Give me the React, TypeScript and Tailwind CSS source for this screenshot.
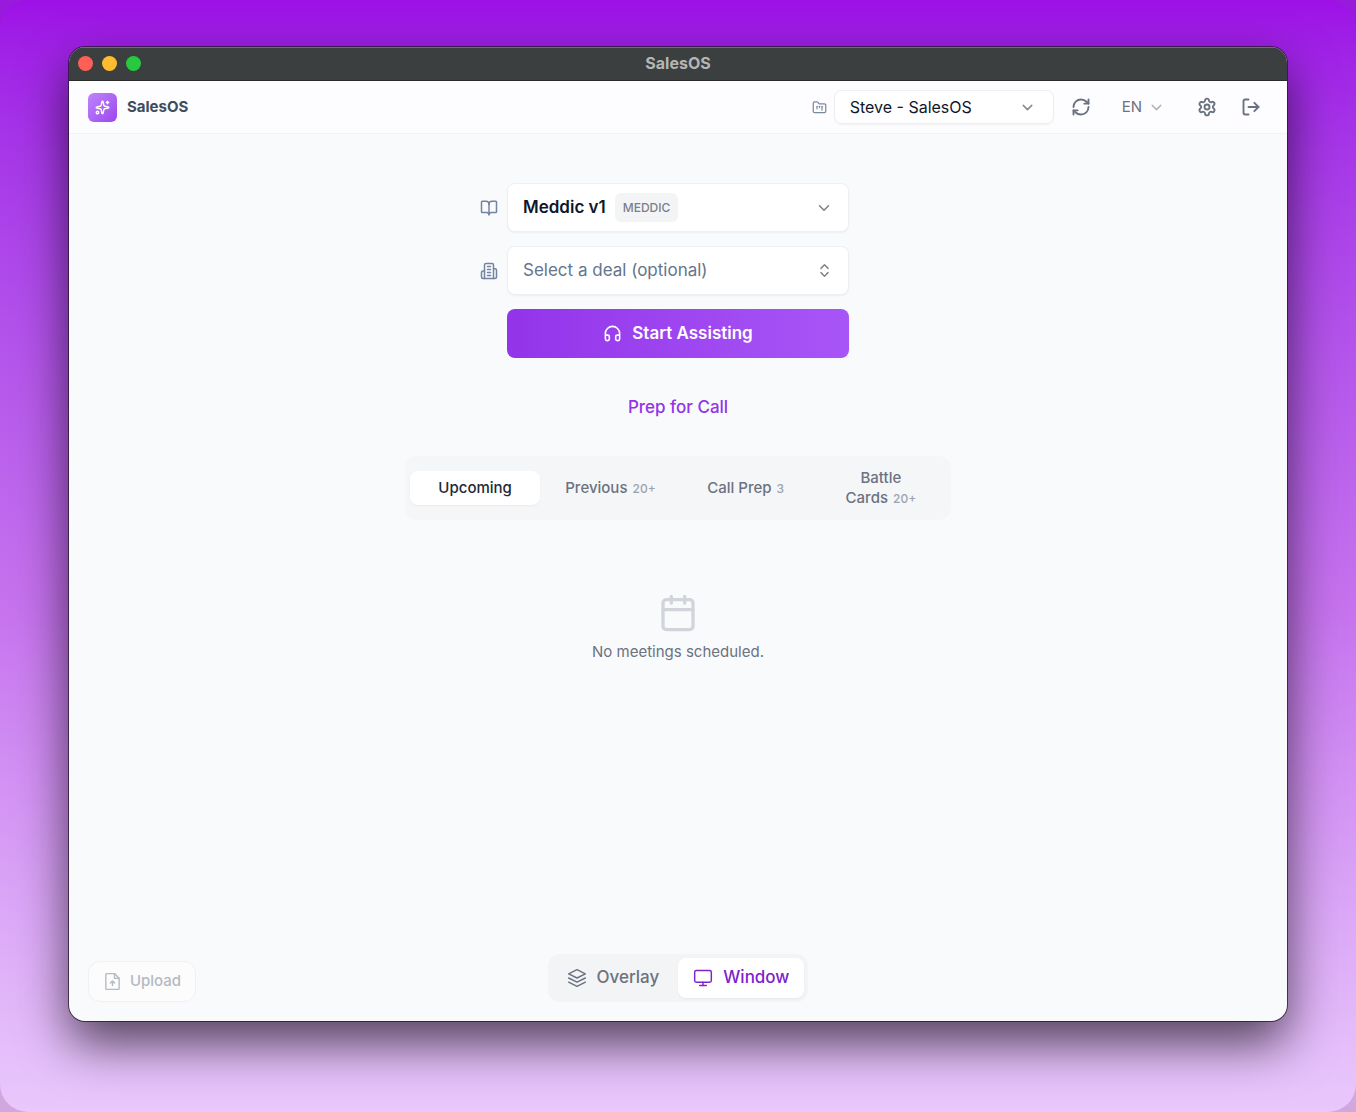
import {
  BookOpen,
  Calendar,
  ChevronDown,
  ChevronsUpDown,
  FolderKanban,
  Headphones,
  LogOut,
  Monitor,
  RefreshCw,
  Settings,
  Sparkles,
} from "lucide-react";
import { useState } from "react";

function BuildingIcon({ className }: { className?: string }) {
  return (
    <svg className={className} viewBox="0 0 24 24" fill="none" stroke="currentColor" strokeWidth="2" strokeLinecap="round" strokeLinejoin="round" aria-hidden="true">
      <path d="M6 22V4a2 2 0 0 1 2-2h8a2 2 0 0 1 2 2v18Z" />
      <path d="M6 12H4a2 2 0 0 0-2 2v6a2 2 0 0 0 2 2h2" />
      <path d="M18 9h2a2 2 0 0 1 2 2v9a2 2 0 0 1-2 2h-2" />
      <path d="M10 6h4M10 10h4M10 14h4M10 18h4" />
    </svg>
  );
}

function FileUpIcon({ className }: { className?: string }) {
  return (
    <svg className={className} viewBox="0 0 24 24" fill="none" stroke="currentColor" strokeWidth="1.75" strokeLinecap="round" strokeLinejoin="round" aria-hidden="true">
      <path d="M14.5 2H4.6a1 1 0 0 0-1 1v18a1 1 0 0 0 1 1h14.8a1 1 0 0 0 1-1V8Z" />
      <path d="M14.5 2v6h6" />
      <path d="M12 17v-5M9.3 14l2.7-2.7 2.7 2.7" />
    </svg>
  );
}

function LayersIcon({ className }: { className?: string }) {
  return (
    <svg className={className} viewBox="0 0 24 24" fill="none" stroke="currentColor" strokeWidth="1.75" strokeLinecap="round" strokeLinejoin="round" aria-hidden="true">
      <path d="M12 2 2 7l10 5 10-5Z" />
      <path d="m2 12 10 5 10-5" />
      <path d="m2 17 10 5 10-5" />
    </svg>
  );
}

function WindowIcon({ className }: { className?: string }) {
  return <Monitor className={className} strokeWidth={1.75} />;
}

const tabs = [
  { label: "Upcoming", count: "" },
  { label: "Previous", count: "20+" },
  { label: "Call Prep", count: "3" },
  { label: "Battle Cards", count: "20+" },
];

const modes = [
  { name: "Overlay", Icon: LayersIcon },
  { name: "Window", Icon: WindowIcon },
];

export default function App() {
  const [tab, setTab] = useState("Upcoming");
  const [mode, setMode] = useState("Window");

  return (
    <div className="bg-linear-to-b from-[#981adb] from-50% to-[#d0a8de] to-50% font-['Inter',sans-serif]">
      <div className="flex min-h-screen flex-col rounded-[28px] bg-linear-to-b from-[#9d10e6] via-[#c673ee] via-55% to-[#e9c8fc] px-[69px] pt-[47px] pb-[91px]">
        <div className="flex grow flex-col overflow-hidden rounded-2xl bg-[#f9fafc] shadow-[0_0_0_1px_rgba(40,20,50,0.75),0_22px_50px_rgba(0,0,0,0.65)]">
          <div className="grid h-[34px] grid-cols-[1fr_auto_1fr] items-center border-t border-b border-t-[#6c6e6f] border-b-[#292b2b] bg-[#3b3f3f] px-[9px] pb-[2px]">
            <div className="flex gap-[9px]">
              <button aria-label="Close" className="size-[15px] rounded-full bg-[#ff5f57]" />
              <button aria-label="Minimize" className="size-[15px] rounded-full bg-[#febc2e]" />
              <button aria-label="Zoom" className="size-[15px] rounded-full bg-[#28c840]" />
            </div>
            <h1 className="text-base leading-5 font-bold text-[#b4b6b6]">SalesOS</h1>
          </div>

          <header className="flex h-[53px] items-center justify-between border-b border-[#f2f3f6] bg-[#fdfcfe] px-[19px]">
            <div className="flex items-center gap-[10px]">
              <div className="flex size-[29px] items-center justify-center rounded-md bg-linear-to-br from-[#c084fc] to-[#9b45ec] text-white">
                <Sparkles className="size-[15px]" strokeWidth={2.25} />
              </div>
              <span className="text-[15px] font-bold text-[#414b5b]">SalesOS</span>
            </div>
            <div className="flex items-center text-[#6b7280]">
              <FolderKanban className="mr-[7px] size-[15px] text-[#7c8aa0]" />
              <button className="flex h-[34px] w-[220px] items-center justify-between rounded-lg border border-[#eeeff2] bg-white pr-[17px] pl-[15px] text-base text-[#0f172a] shadow-xs">
                Steve - SalesOS
                <ChevronDown className="size-[17px] text-[#85878d]" />
              </button>
              <button aria-label="Refresh" className="ml-[17px]">
                <RefreshCw className="size-[20px]" strokeWidth={2.25} />
              </button>
              <button className="ml-[31px] flex items-center gap-[6px] text-[15px] leading-5">
                EN
                <ChevronDown className="size-[17px] text-[#b0b3ba]" />
              </button>
              <button aria-label="Settings" className="ml-8">
                <Settings className="size-[20px]" strokeWidth={2.25} />
              </button>
              <button aria-label="Log out" className="mr-[7px] ml-6">
                <LogOut className="size-[20px]" strokeWidth={2.25} />
              </button>
            </div>
          </header>

          <main className="flex grow flex-col items-center pt-[49px]">
            <div className="grid grid-cols-[18px_342px_18px] items-center gap-x-[9px] gap-y-[14px]">
              <BookOpen className="size-[18px] text-[#7484a0]" />
              <button className="flex h-[49px] items-center rounded-lg border border-[#eeeff2] bg-white px-[15px] text-[17px] font-semibold text-[#0f172a] shadow-xs">
                Meddic v1
                <span className="ml-[9px] flex h-[29px] items-center rounded-md bg-[#f3f4f6] px-2 text-xs font-medium text-[#7a808c]">MEDDIC</span>
                <ChevronDown className="ml-auto size-[18px] text-[#7c7f86]" />
              </button>
              <span />
              <BuildingIcon className="size-[18px] text-[#7484a0]" />
              <button className="flex h-[49px] items-center justify-between rounded-lg border border-[#eeeff2] bg-white px-[15px] text-[17px] text-[#64748b] shadow-xs">
                Select a deal (optional)
                <ChevronsUpDown className="size-[17px] text-[#808288]" />
              </button>
              <span />
              <button className="col-start-2 flex h-[49px] items-center justify-center gap-[10px] rounded-lg bg-linear-to-r from-[#9333ea] to-[#a855f7] text-[17px] font-semibold text-white">
                <Headphones className="size-[19px]" />
                Start Assisting
              </button>
            </div>

            <button className="mt-[37px] text-[17px] leading-6 font-medium text-[#9333ea]">Prep for Call</button>

            <div role="tablist" className="mt-[37px] grid w-full max-w-[546px] grid-cols-4 items-center gap-[5px] rounded-xl bg-[#f5f6f8] p-[5px]">
              {tabs.map((t) => (
                <button
                  key={t.label}
                  role="tab"
                  aria-selected={tab === t.label}
                  onClick={() => setTab(t.label)}
                  className={
                    tab === t.label
                      ? "rounded-lg bg-white px-7 py-[7px] text-[15px] leading-5 font-medium text-[#1f2937] shadow-xs"
                      : "rounded-lg px-5 py-[7px] text-[15px] leading-5 font-medium text-[#6b7280]"
                  }
                >
                  {t.label}
                  {t.count && <span className="ml-[5px] text-xs text-[#9ca3af]">{t.count}</span>}
                </button>
              ))}
            </div>

            <div className="mt-[73px] flex flex-col items-center gap-[9px]">
              <Calendar className="size-[40px] text-[#d1d5db]" />
              <p className="text-[15px] leading-5 text-[#6b7280]">No meetings scheduled.</p>
            </div>
          </main>

          <footer className="grid grid-cols-[1fr_auto_1fr] items-center px-[19px] pb-[19px]">
            <button className="mt-2 flex h-[41px] w-[108px] items-center justify-center gap-2 rounded-xl border border-[#f0f1f4] bg-[#fcfcfd] text-[15px] font-medium text-[#b5b9c1]">
              <FileUpIcon className="size-[19px]" />
              Upload
            </button>
            <div className="flex gap-1 rounded-xl bg-[#f3f4f6] p-1 text-[17px] font-medium">
              {modes.map(({ name, Icon }) => (
                <button
                  key={name}
                  aria-pressed={mode === name}
                  onClick={() => setMode(name)}
                  className={
                    mode === name
                      ? "flex h-10 items-center gap-[10px] rounded-lg bg-white px-[15px] text-[#7e22ce] shadow-xs"
                      : "flex h-10 items-center gap-[10px] rounded-lg px-[15px] text-[#6b7280]"
                  }
                >
                  <Icon className="size-[20px]" />
                  {name}
                </button>
              ))}
            </div>
          </footer>
        </div>
      </div>
    </div>
  );
}
